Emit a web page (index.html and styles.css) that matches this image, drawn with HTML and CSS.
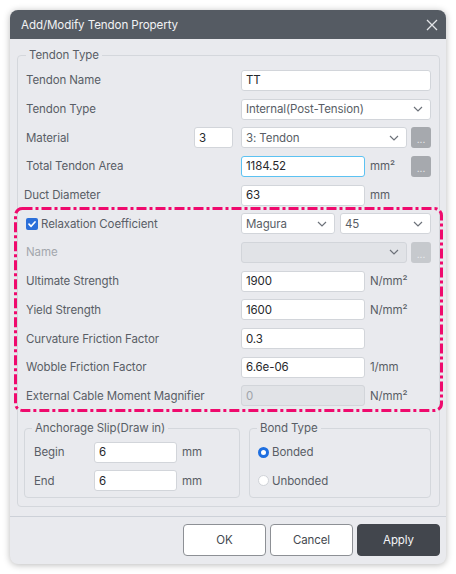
FILE: index.html
```html
<!DOCTYPE html>
<html>
<head>
<meta charset="utf-8">
<link rel="stylesheet" href="styles.css">
</head>
<body>
<div class="dialog">
  <div class="titlebar">
    <span class="title">Add/Modify Tendon Property</span>
    <svg class="close" width="12" height="12" viewBox="0 0 12 12"><path d="M1 1 L11 11 M11 1 L1 11" /></svg>
  </div>
  <div class="body">
    <fieldset class="group main">
      <legend>Tendon Type</legend>
      <div class="rows">
        <div class="row"><span class="lbl">Tendon Name</span><div class="ctl"><div class="in w-full">TT</div></div></div>
        <div class="row"><span class="lbl">Tendon Type</span><div class="ctl"><div class="sel w-full"><span>Internal(Post-Tension)</span><svg class="chev" width="10" height="6" viewBox="0 0 10 6"><path d="M1 1 L5 5 L9 1"/></svg></div></div></div>
        <div class="row"><div class="lbl-cell"><span class="lbl">Material</span><div class="in w-small">3</div></div><div class="ctl"><div class="sel w-sel"><span>3: Tendon</span><svg class="chev" width="10" height="6" viewBox="0 0 10 6"><path d="M1 1 L5 5 L9 1"/></svg></div><div class="dots">...</div></div></div>
        <div class="row"><span class="lbl">Total Tendon Area</span><div class="ctl"><div class="in w-num focus">1184.52</div><span class="unit">mm²</span><div class="dots push">...</div></div></div>
        <div class="row"><span class="lbl shift">Duct Diameter</span><div class="ctl"><div class="in w-num">63</div><span class="unit">mm</span></div></div>
      </div>
      <div class="rows hl">
        <div class="row"><span class="lbl check-lbl"><span class="check"><svg width="12" height="12" viewBox="0 0 12 12"><path d="M3 6.2 L5.1 8.3 L9 4"/></svg></span>Relaxation Coefficient</span><div class="ctl"><div class="sel w-half"><span>Magura</span><svg class="chev" width="10" height="6" viewBox="0 0 10 6"><path d="M1 1 L5 5 L9 1"/></svg></div><div class="sel w-half2"><span>45</span><svg class="chev" width="10" height="6" viewBox="0 0 10 6"><path d="M1 1 L5 5 L9 1"/></svg></div></div></div>
        <div class="row"><span class="lbl dis">Name</span><div class="ctl"><div class="sel w-sel disabled"><span></span><svg class="chev" width="10" height="6" viewBox="0 0 10 6"><path d="M1 1 L5 5 L9 1"/></svg></div><div class="dots disabled">...</div></div></div>
        <div class="row"><span class="lbl">Ultimate Strength</span><div class="ctl"><div class="in w-num">1900</div><span class="unit">N/mm²</span></div></div>
        <div class="row"><span class="lbl">Yield Strength</span><div class="ctl"><div class="in w-num">1600</div><span class="unit">N/mm²</span></div></div>
        <div class="row"><span class="lbl">Curvature Friction Factor</span><div class="ctl"><div class="in w-num">0.3</div></div></div>
        <div class="row"><span class="lbl">Wobble Friction Factor</span><div class="ctl"><div class="in w-num">6.6e-06</div><span class="unit">1/mm</span></div></div>
        <div class="row"><span class="lbl">External Cable Moment Magnifier</span><div class="ctl"><div class="in w-num disabled">0</div><span class="unit">N/mm²</span></div></div>
        <svg class="mark" width="429" height="205" viewBox="0 0 429 205"><rect x="1.5" y="1.5" width="426" height="202" rx="7" ry="7"/></svg>
      </div>
      <div class="subs">
        <fieldset class="group sub anchor">
          <legend>Anchorage Slip(Draw in)</legend>
          <div class="row sub-row"><span class="lbl sub-lbl">Begin</span><div class="in w-sub">6</div><span class="unit">mm</span></div>
          <div class="row sub-row"><span class="lbl sub-lbl">End</span><div class="in w-sub">6</div><span class="unit">mm</span></div>
        </fieldset>
        <fieldset class="group sub bond">
          <legend>Bond Type</legend>
          <div class="row sub-row"><span class="radio on"></span><span class="lbl">Bonded</span></div>
          <div class="row sub-row"><span class="radio"></span><span class="lbl">Unbonded</span></div>
        </fieldset>
      </div>
    </fieldset>
  </div>
  <div class="footer">
    <button class="btn">OK</button>
    <button class="btn">Cancel</button>
    <button class="btn primary">Apply</button>
  </div>
</div>
</body>
</html>
```
FILE: styles.css
```css
* { box-sizing: border-box; }
body {
  margin: 0;
  background: #ffffff;
  font-family: Inter, "Noto Sans", sans-serif;
  font-size: 11.5px;
  letter-spacing: -0.1px;
}
.dialog {
  margin: 10px;
  width: 436px;
  height: 554px;
  border-radius: 8px;
  overflow: hidden;
  background: #e9eaee;
  box-shadow: 0 1px 7px rgba(0, 0, 0, 0.28);
  display: flex;
  flex-direction: column;
}
.titlebar {
  height: 29px;
  flex: none;
  background: #555b63;
  color: #f1f2f4;
  font-size: 11.6px;
  display: flex;
  align-items: center;
  justify-content: space-between;
  padding: 0 8px 0 11px;
}
.close path { stroke: #e3e5e8; stroke-width: 1.3; fill: none; }
.body {
  flex: 1;
  padding: 8px 6px 0 7px;
}
fieldset.group {
  margin: 0;
  border: 1px solid #d4d7dc;
  border-radius: 4px;
  min-width: 0;
}
fieldset.group legend {
  margin-left: 0;
  padding: 0 3px;
  font-size: 11.5px;
  line-height: 16px;
  color: #595e66;
}
fieldset.main { padding: 0 8px 8px 8px; }
fieldset.anchor > legend { margin-left: -2px; }
fieldset.bond > legend { margin-left: -1px; }
.rows { display: flex; flex-direction: column; }
.rows:first-of-type { padding-top: 3px; }
.hl { position: relative; }
.mark {
  position: absolute;
  left: -12px;
  top: -2.2px;
  pointer-events: none;
}
.mark rect {
  fill: none;
  stroke: #ef0a6d;
  stroke-width: 3;
  stroke-dasharray: 10 3 3 3;
}
.row {
  height: 28.7px;
  display: grid;
  grid-template-columns: 1fr 190px;
  align-items: center;
}
.lbl { color: #595e66; white-space: nowrap; }
.lbl.dis { color: #a3a7ad; }
.lbl.shift { margin-left: -2px; }
.lbl-cell {
  display: flex;
  align-items: center;
  justify-content: space-between;
  padding-right: 8px;
}
.check-lbl { display: flex; align-items: center; gap: 3px; }
.check {
  width: 12px;
  height: 12px;
  border-radius: 2px;
  background: #2c6fd9;
  display: inline-flex;
}
.check path { stroke: #fff; stroke-width: 1.7; fill: none; stroke-linecap: round; stroke-linejoin: round; }
.ctl { display: flex; align-items: center; }
.in, .sel {
  height: 21px;
  border: 1px solid #d2d5da;
  border-radius: 3px;
  background: #ffffff;
  padding: 0 4px;
  color: #26282c;
  display: flex;
  align-items: center;
  white-space: nowrap;
}
.sel { justify-content: space-between; padding-right: 7px; color: #595e66; }
.chev path { stroke: #6d727a; stroke-width: 1.2; fill: none; }
.in.focus { border-color: #5cc2f2; }
.in.disabled { background: #e1e3e7; color: #a0a4aa; }
.sel.disabled { background: #e1e3e7; }
.w-full { width: 190px; }
.w-sel { width: 166px; }
.w-small { width: 39px; }
.w-num { width: 124px; }
.w-half { width: 94px; }
.w-half2 { width: 91px; margin-left: 5px; }
.w-sub { width: 83px; }
.unit { color: #595e66; margin-left: 5px; }
.dots {
  width: 20px;
  height: 21px;
  margin-left: 4px;
  border-radius: 3px;
  background: #a6a9ae;
  color: #eef0f2;
  font-size: 10px;
  display: flex;
  align-items: center;
  justify-content: center;
  padding-top: 3px;
}
.dots.push { margin-left: auto; }
.dots.disabled { background: #c6c9cd; }
.subs {
  display: flex;
  gap: 9px;
  margin: 10px 0 0 -2px;
}
fieldset.sub { padding: 1.6px 8px 2px 9px; }
fieldset.anchor { width: 216px; }
fieldset.bond { width: 182px; padding-left: 8px; }
.sub-row { display: flex; align-items: center; }
.sub-lbl { width: 60px; }
.radio {
  width: 11px;
  height: 11px;
  border-radius: 50%;
  background: #fff;
  border: 1px solid #d0d3d8;
  margin-right: 3px;
}
.radio.on { background: #fff; border: 3.5px solid #1f6fe0; }
.footer {
  flex: none;
  border-top: 1px solid #cdd1d8;
  padding: 7px 6px 8px;
  display: flex;
  justify-content: flex-end;
  gap: 4px;
}
.btn {
  width: 83px;
  height: 32px;
  border: 1px solid #8d9095;
  border-radius: 4px;
  background: #ffffff;
  color: #454950;
  font-family: Inter, "Noto Sans", sans-serif;
  font-size: 11.5px;
  letter-spacing: -0.1px;
}
.btn.primary { background: #42464d; border-color: #42464d; color: #f4f5f7; }
```
